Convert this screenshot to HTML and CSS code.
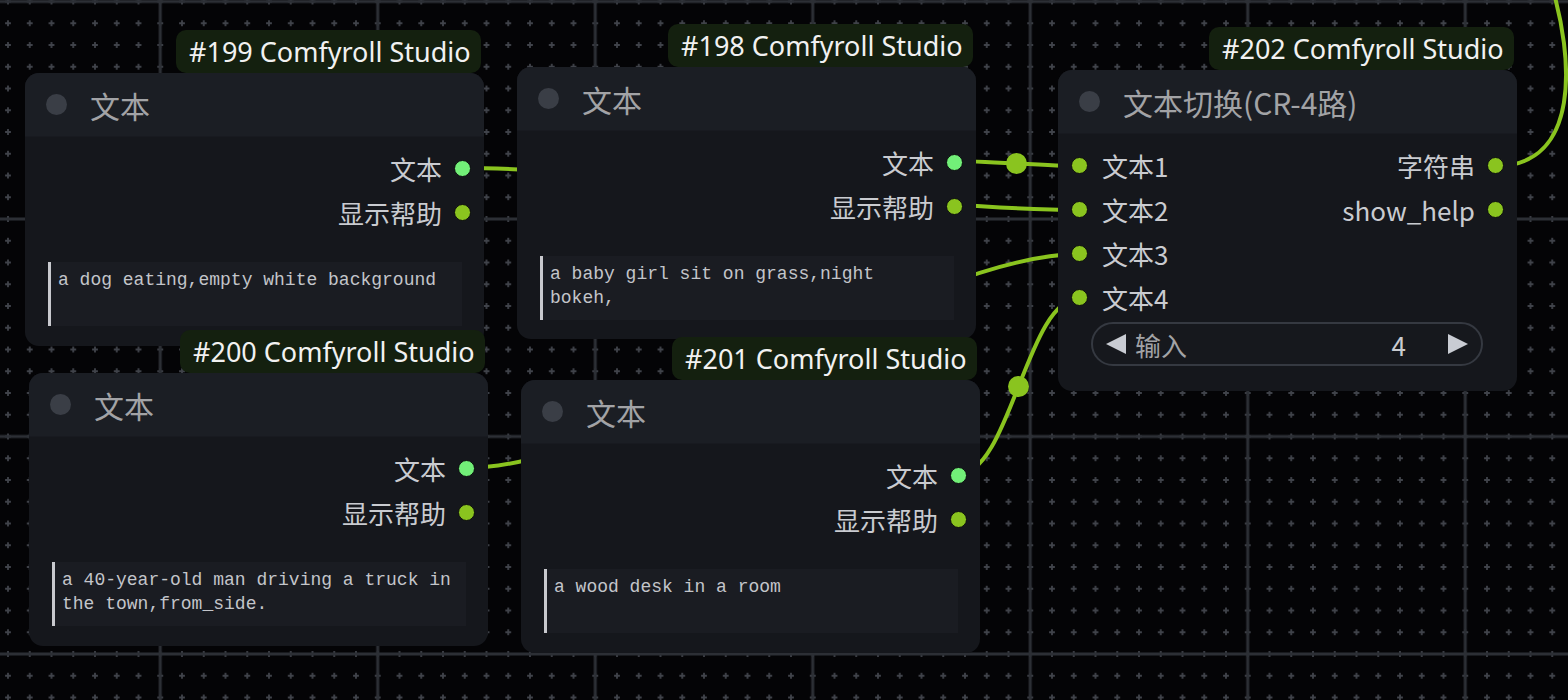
FILE: index.html
```html
<!DOCTYPE html>
<html lang="zh">
<head>
<meta charset="utf-8">
<title>ComfyUI canvas</title>
<link rel="stylesheet" href="styles.css">
</head>
<body>
<div class="canvas">
  <svg class="wires" width="1568" height="700" viewBox="0 0 1568 700">
    <defs>
      <pattern id="plus" width="21.75" height="21.75" patternUnits="userSpaceOnUse" x="149.375" y="-9.375">
        <path d="M8 10.875h5.75M10.875 8v5.75" stroke="#40434a" stroke-width="1.8"/>
      </pattern>
      <pattern id="major" width="217.5" height="217.5" patternUnits="userSpaceOnUse" x="51.5" y="-107.25">
        <path d="M108.75 0v217.5M0 108.75h217.5" stroke="#2c2f35" stroke-width="3"/>
      </pattern>
    </defs>
    <rect width="1568" height="700" fill="#040406"/>
    <rect width="1568" height="700" fill="url(#plus)"/>
    <rect width="1568" height="700" fill="url(#major)"/>
    <g class="links" fill="none" stroke="#8ac41f" stroke-width="4" stroke-linecap="round">
      <path d="M953 161 C984.8 161 1048.2 166 1080 166"/>
      <path d="M462 168 C616.9 168 925.1 210 1080 210"/>
      <path d="M466 468 C628.6 468 917.4 254 1080 254"/>
      <path d="M957 475 C1010.9 475 1026.1 298 1080 298"/>
      <path d="M1496 166 C1580 166 1575 60 1550 -20"/>
    </g>
    <g fill="#8ac41f">
      <circle cx="1016.5" cy="163.5" r="10.5"/>
      <circle cx="1018.5" cy="386.5" r="10.5"/>
    </g>
  </svg>

  <div class="node n199">
    <div class="badge">#199 Comfyroll Studio</div>
    <div class="node-header"><span class="title-dot"></span><span class="title">文本</span></div>
    <div class="node-body">
      <div class="out-row"><span class="label">文本</span><span class="dot bright"></span></div>
      <div class="out-row"><span class="label">显示帮助</span><span class="dot"></span></div>
      <div class="textbox">a dog eating,empty white background</div>
    </div>
  </div>

  <div class="node n198">
    <div class="badge">#198 Comfyroll Studio</div>
    <div class="node-header"><span class="title-dot"></span><span class="title">文本</span></div>
    <div class="node-body">
      <div class="out-row"><span class="label">文本</span><span class="dot bright"></span></div>
      <div class="out-row"><span class="label">显示帮助</span><span class="dot"></span></div>
      <div class="textbox">a baby girl sit on grass,night bokeh,</div>
    </div>
  </div>

  <div class="node n200">
    <div class="badge">#200 Comfyroll Studio</div>
    <div class="node-header"><span class="title-dot"></span><span class="title">文本</span></div>
    <div class="node-body">
      <div class="out-row"><span class="label">文本</span><span class="dot bright"></span></div>
      <div class="out-row"><span class="label">显示帮助</span><span class="dot"></span></div>
      <div class="textbox">a 40-year-old man driving a truck in the town,from_side.</div>
    </div>
  </div>

  <div class="node n201">
    <div class="badge">#201 Comfyroll Studio</div>
    <div class="node-header"><span class="title-dot"></span><span class="title">文本</span></div>
    <div class="node-body">
      <div class="out-row"><span class="label">文本</span><span class="dot bright"></span></div>
      <div class="out-row"><span class="label">显示帮助</span><span class="dot"></span></div>
      <div class="textbox">a wood desk in a room</div>
    </div>
  </div>

  <div class="node n202">
    <div class="badge">#202 Comfyroll Studio</div>
    <div class="node-header"><span class="title-dot"></span><span class="title">文本切换(CR-4路)</span></div>
    <div class="node-body">
      <div class="io-grid">
        <div class="in-row"><span class="dot"></span><span class="label">文本1</span></div>
        <div class="out-row"><span class="label">字符串</span><span class="dot"></span></div>
        <div class="in-row"><span class="dot"></span><span class="label">文本2</span></div>
        <div class="out-row"><span class="label">show_help</span><span class="dot"></span></div>
        <div class="in-row"><span class="dot"></span><span class="label">文本3</span></div>
        <div class="spacer"></div>
        <div class="in-row"><span class="dot"></span><span class="label">文本4</span></div>
        <div class="spacer"></div>
      </div>
      <div class="number-widget">
        <svg class="arrow" width="22" height="22" viewBox="0 0 22 22"><path d="M1 11 L21 1 L21 21 Z" fill="#c9ccd3"/></svg>
        <span class="w-label">输入</span>
        <span class="w-value">4</span>
        <svg class="arrow" width="22" height="22" viewBox="0 0 22 22"><path d="M21 11 L1 1 L1 21 Z" fill="#c9ccd3"/></svg>
      </div>
    </div>
  </div>
</div>
</body>
</html>
```

FILE: styles.css
```css
html, body {
  margin: 0;
  padding: 0;
  background: #040406;
  overflow: hidden;
}

.canvas {
  position: relative;
  width: 1568px;
  height: 700px;
  overflow: hidden;
  font-family: "Noto Sans", "Noto Sans CJK SC", sans-serif;
}

.wires {
  position: absolute;
  left: 0;
  top: 0;
  display: block;
}

.node {
  position: absolute;
  width: 459px;
  background: #15171c;
  border-radius: 14px;
  box-sizing: border-box;
}

.n199 { left: 25px; top: 73px; height: 273px; }
.n198 { left: 517px; top: 67px; height: 272px; }
.n200 { left: 29px; top: 373px; height: 273px; }
.n201 { left: 521px; top: 380px; height: 273px; }
.n202 { left: 1058px; top: 70px; height: 321px; }

.badge {
  position: absolute;
  right: 3px;
  top: -43px;
  width: 305px;
  height: 43px;
  box-sizing: border-box;
  padding-left: 13px;
  padding-bottom: 1px;
  display: flex;
  align-items: center;
  background: #14200f;
  border-radius: 10px;
  color: #f1f1f1;
  font-family: "Noto Sans", sans-serif;
  font-size: 27px;
  white-space: nowrap;
}

.node-header {
  height: 64px;
  display: flex;
  align-items: center;
  gap: 13px;
  padding-left: 21px;
  background: #1b1e24;
  border-radius: 14px 14px 0 0;
  border-bottom: 1px solid #181a20;
  box-sizing: border-box;
}

.title-dot {
  width: 21px;
  height: 21px;
  border-radius: 50%;
  background: #3a3e46;
  margin-right: 10px;
}

.title {
  font-family: "Noto Sans CJK SC", sans-serif;
  font-size: 30px;
  color: #a2a3a6;
}

.node-body {
  padding-top: 9px;
}

.out-row,
.in-row {
  height: 44px;
  display: flex;
  align-items: center;
  gap: 12px;
}

.out-row {
  justify-content: flex-end;
  padding-right: 13px;
}

.in-row {
  justify-content: flex-start;
  padding-left: 13px;
  gap: 14px;
}

.label {
  font-family: "Noto Sans CJK SC", sans-serif;
  font-size: 26px;
  color: #c9cbd0;
}

.dot {
  width: 15px;
  height: 15px;
  border-radius: 50%;
  background: #8ac41f;
  border: 1.5px solid #0b0c0e;
  flex: none;
}

.dot.bright {
  background: #72ef78;
}

.textbox {
  margin: 28px 22px 0 23px;
  height: 64px;
  box-sizing: border-box;
  padding: 6px 10px 4px 7px;
  background: #1a1c22;
  border-left: 3px solid #c8c9ce;
  font-family: "Liberation Mono", monospace;
  font-size: 18px;
  line-height: 24px;
  color: #c3c5ca;
  white-space: pre-wrap;
  word-break: normal;
  overflow: hidden;
}

.io-grid {
  display: grid;
  grid-template-columns: 1fr 1fr;
}

.number-widget {
  margin: 3px 34px 0 33px;
  height: 44px;
  box-sizing: border-box;
  border: 2px solid #353941;
  border-radius: 22px;
  background: #16181d;
  display: flex;
  align-items: center;
  padding: 0 12px 0 12px;
  gap: 8px;
}

.w-label {
  font-family: "Noto Sans CJK SC", sans-serif;
  font-size: 26px;
  color: #a2a3a6;
  flex: 1;
}

.w-value {
  font-family: "Noto Sans CJK SC", sans-serif;
  font-size: 26px;
  color: #c9cbd0;
  margin-right: 33px;
}

.arrow {
  flex: none;
  display: block;
}
```
